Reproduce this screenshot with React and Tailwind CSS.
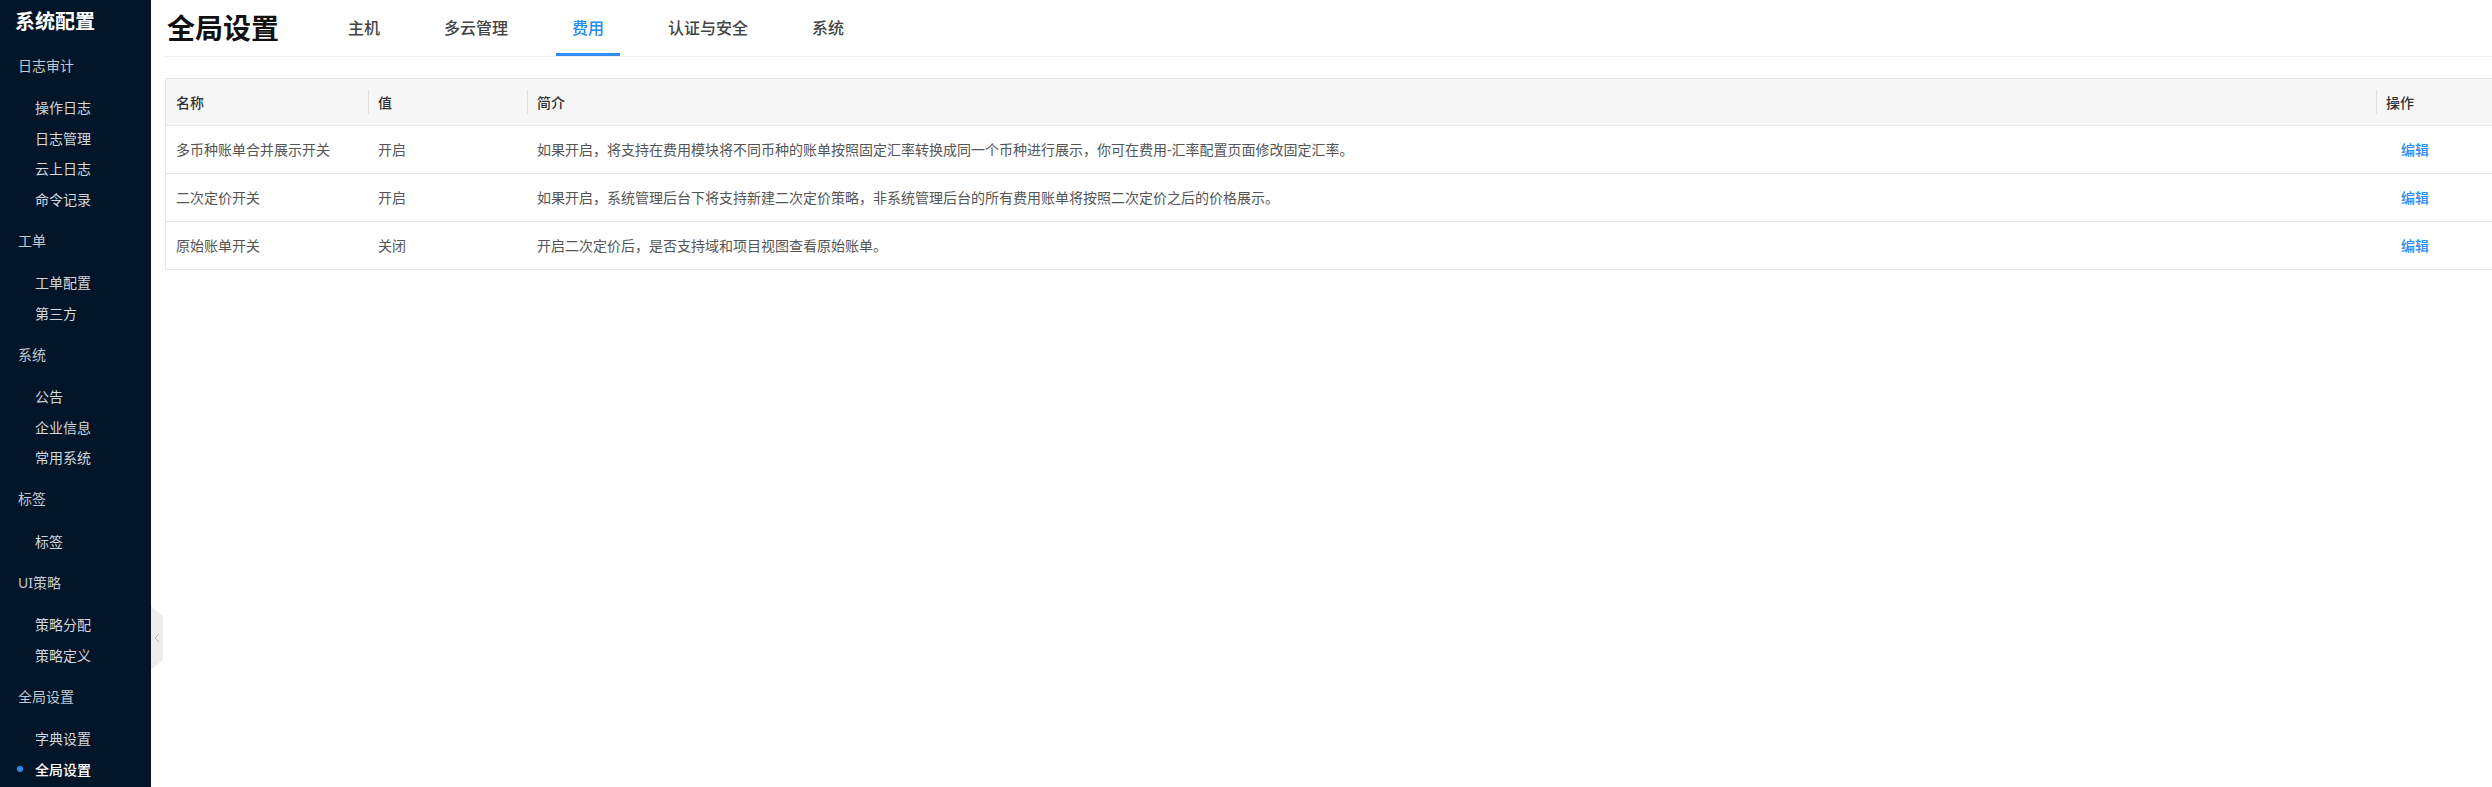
import React from "react";

const menu = [
  { group: "日志审计", items: ["操作日志", "日志管理", "云上日志", "命令记录"] },
  { group: "工单", items: ["工单配置", "第三方"] },
  { group: "系统", items: ["公告", "企业信息", "常用系统"] },
  { group: "标签", items: ["标签"] },
  { group: "UI策略", items: ["策略分配", "策略定义"] },
  { group: "全局设置", items: ["字典设置", "全局设置"] },
];

const tabs = ["主机", "多云管理", "费用", "认证与安全", "系统"];

const rows = [
  {
    name: "多币种账单合并展示开关",
    value: "开启",
    desc: "如果开启，将支持在费用模块将不同币种的账单按照固定汇率转换成同一个币种进行展示，你可在费用-汇率配置页面修改固定汇率。",
  },
  {
    name: "二次定价开关",
    value: "开启",
    desc: "如果开启，系统管理后台下将支持新建二次定价策略，非系统管理后台的所有费用账单将按照二次定价之后的价格展示。",
  },
  {
    name: "原始账单开关",
    value: "关闭",
    desc: "开启二次定价后，是否支持域和项目视图查看原始账单。",
  },
];

function Sidebar() {
  return (
    <aside className="w-[151px] h-screen shrink-0 bg-[#021529] text-[14px]">
      <div className="h-[44px] flex items-center pl-[15px] text-[20px] font-bold text-white">
        系统配置
      </div>
      <div className="pt-[6px]">
        {menu.map((g, gi) => (
          <div key={g.group}>
            <div className="h-[30px] flex items-center pl-[18px] text-[#c3c8cf]">{g.group}</div>
            <ul className="mt-[12.2px] mb-[10.7px]">
              {g.items.map((it, ii) => {
                const active = gi === menu.length - 1 && ii === g.items.length - 1;
                return (
                  <li
                    key={it}
                    className={
                      "h-[30.6px] flex items-center relative pl-[35px] " +
                      (active ? "text-white font-medium" : "text-[#d3d7dc]")
                    }
                  >
                    {active && (
                      <span className="absolute left-[17px] top-[12px] w-[6px] h-[6px] rounded-full bg-[#2f8cf5]" />
                    )}
                    {it}
                  </li>
                );
              })}
            </ul>
          </div>
        ))}
      </div>
    </aside>
  );
}

export default function App() {
  return (
    <div
      className="flex h-screen w-full overflow-hidden bg-white relative"
      style={{ fontFamily: '"Noto Sans", "Noto Sans CJK SC", sans-serif' }}
    >
      <Sidebar />

      {/* collapse handle */}
      <div className="absolute left-[151px] top-[606px] w-[12px] h-[64px] bg-[#ececec] [clip-path:polygon(0_0,100%_10px,100%_calc(100%-10px),0_100%)] flex items-center justify-center">
        <svg width="6" height="10" viewBox="0 0 6 10" fill="none">
          <path d="M5 1L1 5l4 4" stroke="#b5b5b5" strokeWidth="1" />
        </svg>
      </div>

      <main className="flex-1 pl-[14px] min-w-0">
        <header className="h-[57px] flex items-stretch border-b border-[#f0f0f0]">
          <div className="flex items-center pl-[2px] text-[28px] font-bold text-[#111]">全局设置</div>
          <nav className="flex ml-[53px] gap-[32px]">
            {tabs.map((t) => {
              const active = t === "费用";
              return (
                <div
                  key={t}
                  className={
                    "flex items-center px-4 pt-[3px] text-[16px] font-medium border-b-[3px] " +
                    (active ? "text-[#1f8cf0] border-[#2f8ff2]" : "text-[#444] border-transparent")
                  }
                >
                  {t}
                </div>
              );
            })}
          </nav>
        </header>

        <div className="mt-[21px] border-t border-l border-[#e6e6e6] text-[14px]">
          <div className="grid grid-cols-[202px_159px_1fr_116px] h-[47px] bg-[#f7f7f7] border-b border-[#e6e6e6] text-[#333] font-medium">
            <div className="flex items-center pl-[10px]">名称</div>
            <div className="flex items-center">
              <div className="h-[24px] border-l border-[#dedede] flex items-center pl-[9px]">值</div>
            </div>
            <div className="flex items-center">
              <div className="h-[24px] border-l border-[#dedede] flex items-center pl-[9px]">简介</div>
            </div>
            <div className="flex items-center">
              <div className="h-[24px] border-l border-[#dedede] flex items-center pl-[9px]">操作</div>
            </div>
          </div>
          {rows.map((r) => (
            <div
              key={r.name}
              className="grid grid-cols-[202px_159px_1fr_116px] h-[48px] border-b border-[#e6e6e6] text-[#555]"
            >
              <div className="flex items-center pl-[10px]">{r.name}</div>
              <div className="flex items-center pl-[10px]">{r.value}</div>
              <div className="flex items-center pl-[10px]">{r.desc}</div>
              <div className="flex items-center pl-[25px] text-[#2a8cf0] font-medium">编辑</div>
            </div>
          ))}
        </div>
      </main>
    </div>
  );
}
